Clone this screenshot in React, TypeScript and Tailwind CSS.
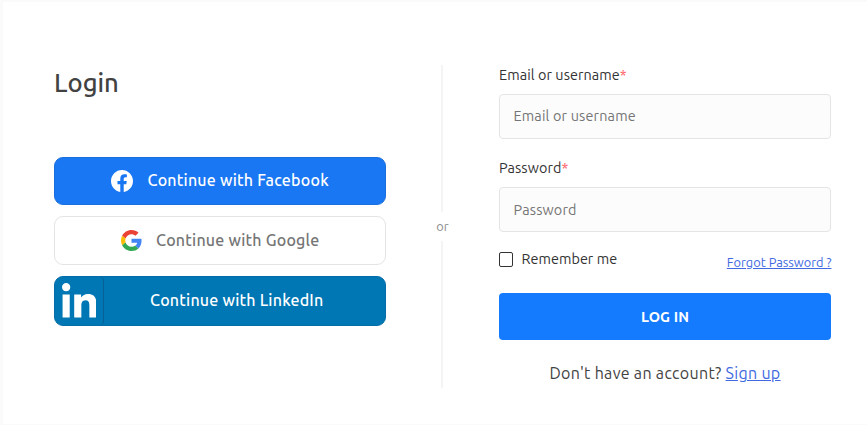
import type { ReactNode } from "react";

function FacebookIcon() {
  return (
    <svg viewBox="0 0 24 24" className="block size-[22px] shrink-0" fill="#fff">
      <path d="M24 12.073C24 5.446 18.627 0 12 0S0 5.446 0 12.073c0 6.026 4.388 11.02 10.125 11.927v-8.437H7.078v-3.49h3.047V9.413c0-3.026 1.792-4.697 4.533-4.697 1.312 0 2.686.236 2.686.236v2.971H15.83c-1.491 0-1.956.93-1.956 1.886v2.264h3.328l-.532 3.49h-2.796V24C19.612 23.093 24 18.099 24 12.073z" />
    </svg>
  );
}

function GoogleIcon() {
  return (
    <svg viewBox="0 0 48 48" className="block size-[21px] shrink-0">
      <path fill="#EA4335" d="M24 9.5c3.54 0 6.71 1.22 9.21 3.6l6.85-6.85C35.9 2.38 30.47 0 24 0 14.62 0 6.51 5.38 2.56 13.22l7.98 6.19C12.43 13.72 17.74 9.5 24 9.5z" />
      <path fill="#4285F4" d="M46.98 24.55c0-1.57-.15-3.09-.38-4.55H24v9.02h12.94c-.58 2.96-2.26 5.48-4.78 7.18l7.73 6c4.51-4.18 7.09-10.36 7.09-17.65z" />
      <path fill="#FBBC05" d="M10.53 28.59c-.48-1.45-.76-2.99-.76-4.59s.27-3.14.76-4.59l-7.98-6.19C.92 16.46 0 20.12 0 24c0 3.88.92 7.54 2.56 10.78l7.97-6.19z" />
      <path fill="#34A853" d="M24 48c6.48 0 11.93-2.13 15.89-5.81l-7.73-6c-2.15 1.45-4.92 2.3-8.16 2.3-6.26 0-11.57-4.22-13.47-9.91l-7.98 6.19C6.51 42.62 14.62 48 24 48z" />
    </svg>
  );
}

function LinkedInIcon() {
  return (
    <svg viewBox="0 0 448 448" className="mb-px block size-[34.5px]" fill="#fff">
      <path d="M100.28 448H7.4V148.9h92.88zM53.79 108.1C24.09 108.1 0 83.5 0 53.8a53.79 53.79 0 0 1 107.58 0c0 29.7-24.1 54.3-53.79 54.3zM447.9 448h-92.68V302.4c0-34.7-.7-79.2-48.29-79.2-48.29 0-55.69 37.7-55.69 76.7V448h-92.78V148.9h89.08v40.8h1.3c12.4-23.5 42.69-48.3 87.88-48.3 94 0 111.28 61.9 111.28 142.3V448z" />
    </svg>
  );
}

function Field({ label, inset }: { label: string; inset: string }) {
  return (
    <label className="block">
      <span className="block h-5 text-[14.4px] leading-5 text-[#333]">
        <span className="tracking-[0.08px]">{label}</span>
        <span className="text-[#ff5a5f]">*</span>
      </span>
      <input
        placeholder={label}
        className={`mt-[9px] block h-[45px] w-full rounded-[4px] border border-[#e4e4e4] bg-[#fcfcfc] px-[13.5px] text-[14.4px] tracking-[0.17px] text-[#757575] outline-none placeholder:text-[#757575] ${inset}`}
      />
    </label>
  );
}

function Divider({ children }: { children: ReactNode }) {
  return (
    <div className="mt-[63px] mr-[2px] flex h-[323px] w-[111px] flex-col items-center text-[12.8px] text-[#8c8c8c]">
      <div className="h-[147px] w-[2px] bg-[#f4f4f4]" />
      <div className="flex h-[29px] items-center pl-[2px]">{children}</div>
      <div className="w-[2px] flex-1 bg-[#f4f4f4]" />
    </div>
  );
}

export default function App() {
  return (
    <div className="h-[425px] w-[867px] overflow-hidden bg-[#fafafa] pt-[2px] pl-[3px] font-['Ubuntu','Noto_Sans',sans-serif]">
      <main className="flex h-[422px] w-[864px] bg-white pl-[51px]">
        <section className="w-[332px] pt-[62px]">
          <h1 className="h-[38px] text-[25.6px] leading-[38px] font-medium text-[#424242]">Login</h1>
          <div className="mt-[55px] flex flex-col text-[16px] font-medium tracking-[0.22px]">
            <button className="flex h-12 items-center rounded-[9px] border border-[#1a6fdc] bg-[#1977f3] pl-14 text-white">
              <FacebookIcon />
              <span className="ml-[14.5px] pb-[2px] whitespace-nowrap">Continue with Facebook</span>
            </button>
            <button className="mt-[11px] flex h-[49px] items-center rounded-[9px] border border-[#e4e4e4] bg-white pl-[65.5px] text-[#757575]">
              <GoogleIcon />
              <span className="ml-[14.5px] pb-px whitespace-nowrap">Continue with Google</span>
            </button>
            <button className="mt-[11px] flex h-[50px] items-center overflow-hidden rounded-[9px] border border-[#046da8] bg-[#0077b5] text-white">
              <span className="flex h-full w-[49px] items-center rounded-r-[4px] border-r border-[#066094] pl-[6.5px]">
                <LinkedInIcon />
              </span>
              <span className="ml-[46px] pb-[2px] whitespace-nowrap">Continue with LinkedIn</span>
            </button>
          </div>
        </section>

        <Divider>or</Divider>

        <section className="w-[332px] pt-[63px]">
          <Field label="Email or username" inset="pb-px" />
          <div className="mt-[19px]">
            <Field label="Password" inset="pt-px" />
          </div>
          <div className="mt-4 flex h-6 items-center justify-between">
            <label className="flex items-center text-[14.4px] text-[#333]">
              <span className="mr-[8.5px] block h-[15px] w-[14px] rounded-[2px] border border-[#333] bg-white" />
              <span className="tracking-[0.05px]">Remember me</span>
            </label>
            <a className="mt-[5px] -mr-[0.5px] text-[12.8px] text-[#4169e1] underline">Forgot Password ?</a>
          </div>
          <button className="mt-[21px] block h-[47px] w-full rounded-[4px] bg-[#147bff] pt-[2px] text-[14.4px] font-bold tracking-[0.1px] text-white">LOG IN</button>
          <p className="mt-5 text-center text-[16px] leading-[26px] tracking-[0.32px] whitespace-nowrap text-[#424242]">
            Don't have an account? <a className="text-[#4169e1] underline">Sign up</a>
          </p>
        </section>
      </main>
    </div>
  );
}
